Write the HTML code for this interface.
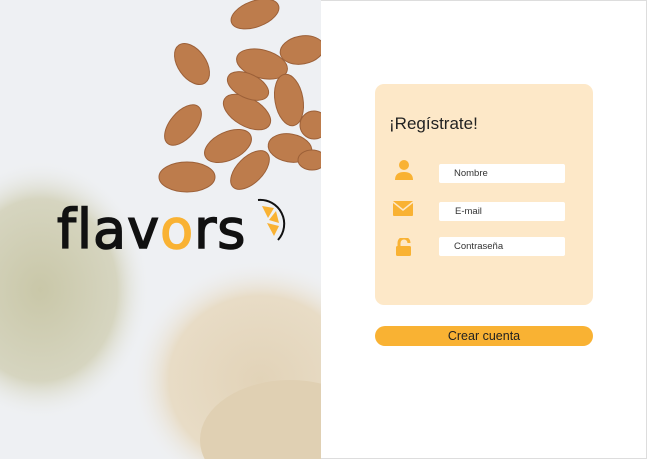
<!DOCTYPE html><html><head><style>
html,body{margin:0;width:648px;height:459px;overflow:hidden}
body{background:#fff;font-family:"Liberation Sans",sans-serif;position:relative}
.left{position:absolute;left:0;top:0;width:321px;height:459px;background:#eef0f3;overflow:hidden}
.card{position:absolute;left:375px;top:84px;width:218px;height:221px;background:#fde8c8;border-radius:9px}
.inp{position:absolute;left:439px;width:126px;height:19px;background:#fff;border-radius:2px;font-size:9.5px;color:#333;line-height:19px;box-sizing:border-box}
.btn{position:absolute;left:375px;top:326px;width:218px;height:20px;background:#f9b233;border-radius:10px;text-align:center;font-size:12.5px;line-height:20px;color:#222}
</style></head><body>
<div class="left">
<svg width="321" height="459" style="position:absolute;left:0;top:0;display:block">
<defs>
<radialGradient id="s" cx="0.5" cy="0.5" r="0.5"><stop offset="0" stop-color="#c9c7a8"/><stop offset="0.7" stop-color="#d6d5c0"/><stop offset="1" stop-color="#eef0f3" stop-opacity="0"/></radialGradient>
<radialGradient id="o" cx="0.5" cy="0.5" r="0.5"><stop offset="0" stop-color="#e2d3b8"/><stop offset="0.7" stop-color="#e8dcc6"/><stop offset="1" stop-color="#eef0f3" stop-opacity="0"/></radialGradient>
</defs>
<ellipse cx="40" cy="290" rx="110" ry="130" fill="url(#s)"/>
<ellipse cx="260" cy="380" rx="130" ry="120" fill="url(#o)"/>
<ellipse cx="290" cy="440" rx="90" ry="60" fill="#e0d0b3"/>
<g fill="#bd7c4c" stroke="#9c6038" stroke-width="1">
<ellipse cx="255" cy="14" rx="25" ry="13" transform="rotate(-20 255 14)"/>
<ellipse cx="192" cy="64" rx="23" ry="14" transform="rotate(55 192 64)"/>
<ellipse cx="183" cy="125" rx="24" ry="13" transform="rotate(-50 183 125)"/>
<ellipse cx="228" cy="146" rx="25" ry="14" transform="rotate(-25 228 146)"/>
<ellipse cx="262" cy="64" rx="26" ry="14" transform="rotate(15 262 64)"/>
<ellipse cx="302" cy="50" rx="22" ry="14" transform="rotate(-10 302 50)"/>
<ellipse cx="289" cy="100" rx="26" ry="14" transform="rotate(80 289 100)"/>
<ellipse cx="250" cy="170" rx="24" ry="13" transform="rotate(-45 250 170)"/>
<ellipse cx="187" cy="177" rx="28" ry="15"/>
<ellipse cx="290" cy="148" rx="22" ry="14" transform="rotate(10 290 148)"/>
<ellipse cx="247" cy="112" rx="26" ry="14" transform="rotate(30 247 112)"/>
<ellipse cx="248" cy="86" rx="22" ry="12" transform="rotate(25 248 86)"/>
<ellipse cx="314" cy="125" rx="14" ry="14"/>
<ellipse cx="312" cy="160" rx="14" ry="10"/>
</g>
</svg>
<div style="position:absolute;left:57px;top:198px;font-size:54px;letter-spacing:1px;-webkit-text-stroke:1.5px #111;font-family:'DejaVu Sans',sans-serif;color:#111;line-height:64px">flav<span style="color:#f9b233;-webkit-text-stroke:1.5px #f9b233">o</span>rs</div>
<svg width="36" height="46" style="position:absolute;left:252px;top:198px" viewBox="0 0 36 46">
<path d="M6 2 A24 24 0 0 1 26 42" fill="none" stroke="#111" stroke-width="2"/>
<path d="M10 8 L22 10 L16 20 Z M17 22 L24 13 L27 25 Z M15 25 L27 28 L22 38 Z" fill="#f9b233"/>
</svg>
</div>
<div style="position:absolute;left:321px;top:0;width:326px;height:459px;border:1px solid #ddd;border-left:none;box-sizing:border-box"></div>
<div class="card"></div>
<div style="position:absolute;left:389px;top:114px;font-size:17px;color:#222">¡Regístrate!</div>
<svg width="20" height="20" style="position:absolute;left:395px;top:160px" viewBox="0 0 20 20"><circle cx="9" cy="5" r="5" fill="#f9b233"/><path d="M0 20 Q0 12 9 12 Q18 12 18 20 Z" fill="#f9b233"/></svg>
<svg width="20" height="16" style="position:absolute;left:393px;top:201px" viewBox="0 0 20 16"><rect width="20" height="15" rx="1" fill="#f9b233"/><path d="M0 1 L10 9 L20 1" stroke="#fde8c8" stroke-width="1.5" fill="none"/></svg>
<svg width="16" height="18" style="position:absolute;left:396px;top:238px" viewBox="0 0 16 18"><path d="M3 8 V5 A5 5 0 0 1 13 5" stroke="#f9b233" stroke-width="3" fill="none"/><rect x="0" y="8" width="15" height="10" rx="1.5" fill="#f9b233"/></svg>
<div class="inp" style="top:164px;padding-left:15px">Nombre</div>
<div class="inp" style="top:202px;padding-left:16px">E-mail</div>
<div class="inp" style="top:237px;padding-left:15px">Contraseña</div>
<div class="btn">Crear cuenta</div>
</body></html>
